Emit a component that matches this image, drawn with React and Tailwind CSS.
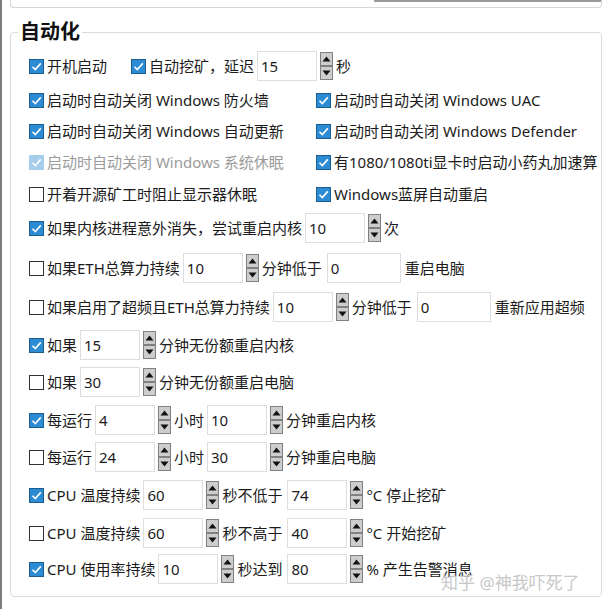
import React from "react";

function Box({ checked, disabled }) {
    const tone = disabled
        ? "bg-[#a6cdea] border-[#a6cdea]"
        : checked
          ? "bg-[#2b8bd3] border-[#1c5c8f]"
          : "bg-white border-[#333333]";
    return (
        <span
            className={`flex h-[15px] w-[15px] shrink-0 items-center justify-center border ${tone}`}
        >
            {checked && (
                <svg width="13" height="13" viewBox="0 0 13 13">
                    <polyline
                        points="2.5,6.8 5.3,9.6 10.8,3.4"
                        fill="none"
                        stroke="white"
                        strokeWidth="1.6"
                    />
                </svg>
            )}
        </span>
    );
}

function Check({ checked, disabled, children }) {
    return (
        <label
            className={`flex items-center gap-[3px] whitespace-nowrap ${
                disabled ? "text-[#9b9b9b]" : ""
            }`}
        >
            <Box checked={checked} disabled={disabled} />
            <span>{children}</span>
        </label>
    );
}

function Arrow({ up }) {
    return (
        <span className="flex h-[14px] w-[13px] items-center justify-center border border-[#808080] bg-[#cdcdcd]">
            <svg width="9" height="6" viewBox="0 0 9 6">
                {up ? (
                    <polygon points="0.5,5.5 4.5,0.5 8.5,5.5" fill="#111" />
                ) : (
                    <polygon points="0.5,0.5 4.5,5.5 8.5,0.5" fill="#111" />
                )}
            </svg>
        </span>
    );
}

function Spin({ value }) {
    return (
        <div className="flex items-center gap-[3px]">
            <div className="flex h-[30px] w-[60px] items-center border border-[#dedede] bg-white pl-[3px]">
                {value}
            </div>
            <div className="flex flex-col">
                <Arrow up />
                <Arrow />
            </div>
        </div>
    );
}

function Field({ value }) {
    return (
        <div className="flex h-[30px] w-[74px] items-center border border-[#dedede] bg-white pl-[3px]">
            {value}
        </div>
    );
}

export default function App() {
    return (
        <div className="relative h-[609px] w-[602px] overflow-hidden bg-white font-['Noto_Sans','Noto_Sans_CJK_SC',sans-serif] text-[15px] text-[#1b1b1b]">
            <div className="flex h-full border-l-2 border-[#7d7d7d] pl-[8px]">
                <div className="flex w-[640px] flex-col">
                    {/* tail of the previous settings group */}
                    <div className="relative h-[8px] rounded-b-[4px] border-x border-b border-[#d6d6d6] bg-white">
                        <div className="ml-[363px] h-[2px] bg-[#9a9a9a]" />
                    </div>

                    <fieldset className="mt-[10px] rounded-[4px] border border-[#dcdcdc] pb-[12px] pl-[18px]">
                        <legend className="ml-[-11px] h-[28px] px-[2px] text-[20px] font-bold leading-[28px] text-[#111]">
                            自动化
                        </legend>

                        <div className="mt-[5px] flex h-[30px] items-center">
                            <Check checked>开机启动</Check>
                            <div className="ml-[24px] flex items-center gap-[3px]">
                                <Check checked>自动挖矿，延迟</Check>
                                <Spin value="15" />
                                <span>秒</span>
                            </div>
                        </div>

                        <div className="mt-[4px] grid h-[30px] grid-cols-[287px_auto] items-center">
                            <Check checked>启动时自动关闭 Windows 防火墙</Check>
                            <Check checked>启动时自动关闭 Windows UAC</Check>
                        </div>
                        <div className="mt-[1px] grid h-[30px] grid-cols-[287px_auto] items-center">
                            <Check checked>启动时自动关闭 Windows 自动更新</Check>
                            <Check checked>启动时自动关闭 Windows Defender</Check>
                        </div>
                        <div className="mt-[1px] grid h-[30px] grid-cols-[287px_auto] items-center">
                            <Check checked disabled>
                                启动时自动关闭 Windows 系统休眠
                            </Check>
                            <Check checked>有1080/1080ti显卡时启动小药丸加速算</Check>
                        </div>
                        <div className="mt-[2px] grid h-[30px] grid-cols-[287px_auto] items-center">
                            <Check>开着开源矿工时阻止显示器休眠</Check>
                            <Check checked>Windows蓝屏自动重启</Check>
                        </div>

                        <div className="mt-[4px] flex h-[30px] items-center gap-[3px]">
                            <Check checked>如果内核进程意外消失，尝试重启内核</Check>
                            <Spin value="10" />
                            <span>次</span>
                        </div>

                        <div className="mt-[10px] flex h-[30px] items-center gap-[3px]">
                            <Check>如果ETH总算力持续</Check>
                            <Spin value="10" />
                            <span className="mr-[2px]">分钟低于</span>
                            <Field value="0" />
                            <span className="ml-[1px]">重启电脑</span>
                        </div>
                        <div className="mt-[9px] flex h-[30px] items-center gap-[3px]">
                            <Check>如果启用了超频且ETH总算力持续</Check>
                            <Spin value="10" />
                            <span className="mr-[2px]">分钟低于</span>
                            <Field value="0" />
                            <span className="ml-[1px]">重新应用超频</span>
                        </div>

                        <div className="mt-[8px] flex h-[30px] items-center gap-[3px]">
                            <Check checked>如果</Check>
                            <Spin value="15" />
                            <span>分钟无份额重启内核</span>
                        </div>
                        <div className="mt-[7px] flex h-[30px] items-center gap-[3px]">
                            <Check>如果</Check>
                            <Spin value="30" />
                            <span>分钟无份额重启电脑</span>
                        </div>

                        <div className="mt-[8px] flex h-[30px] items-center gap-[3px]">
                            <Check checked>每运行</Check>
                            <Spin value="4" />
                            <span>小时</span>
                            <Spin value="10" />
                            <span>分钟重启内核</span>
                        </div>
                        <div className="mt-[7px] flex h-[30px] items-center gap-[3px]">
                            <Check>每运行</Check>
                            <Spin value="24" />
                            <span>小时</span>
                            <Spin value="30" />
                            <span>分钟重启电脑</span>
                        </div>

                        <div className="mt-[8px] flex h-[30px] items-center gap-[3px]">
                            <Check checked>CPU 温度持续</Check>
                            <Spin value="60" />
                            <span className="mr-[2px]">秒不低于</span>
                            <Spin value="74" />
                            <span>°C 停止挖矿</span>
                        </div>
                        <div className="mt-[8px] flex h-[30px] items-center gap-[3px]">
                            <Check>CPU 温度持续</Check>
                            <Spin value="60" />
                            <span className="mr-[2px]">秒不高于</span>
                            <Spin value="40" />
                            <span>°C 开始挖矿</span>
                        </div>
                        <div className="mt-[6px] flex h-[30px] items-center gap-[3px]">
                            <Check checked>CPU 使用率持续</Check>
                            <Spin value="10" />
                            <span className="mr-[2px]">秒达到</span>
                            <Spin value="80" />
                            <span>% 产生告警消息</span>
                        </div>
                    </fieldset>
                </div>
            </div>

            <span className="absolute left-[441px] top-[573px] text-[17px] leading-[20px] text-[#c8c8c8]">
                知乎 @神我吓死了
            </span>
        </div>
    );
}
